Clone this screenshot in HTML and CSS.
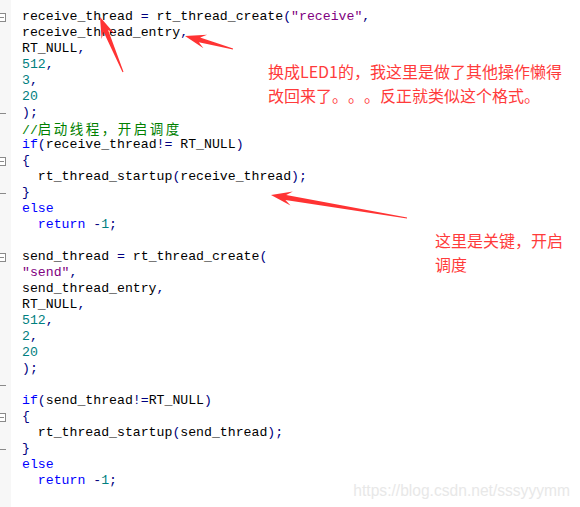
FILE: index.html
```html
<!DOCTYPE html>
<html lang="zh-CN">
<head>
<meta charset="utf-8">
<title>rt_thread code</title>
<link rel="stylesheet" href="styles.css">
</head>
<body>
<div class="shot">
  <div class="editor">
    <div class="ln"><span class="g"><i class="box"></i></span><code>receive_thread <b>=</b> rt_thread_create<b>(</b><s>"receive"</s><b>,</b></code></div>
    <div class="ln"><span class="g"></span><code>receive_thread_entry<b>,</b></code></div>
    <div class="ln"><span class="g"></span><code>RT_NULL<b>,</b></code></div>
    <div class="ln"><span class="g"></span><code><em>512</em><b>,</b></code></div>
    <div class="ln"><span class="g"></span><code><em>3</em><b>,</b></code></div>
    <div class="ln"><span class="g"></span><code><em>20</em></code></div>
    <div class="ln"><span class="g"><i class="tick"></i></span><code><b>);</b></code></div>
    <div class="ln"><span class="g"></span><code><u>//<span class="cjk">启动线程，开启调度</span></u></code></div>
    <div class="ln"><span class="g"></span><code><strong>if</strong><b>(</b>receive_thread<b>!=</b> RT_NULL<b>)</b></code></div>
    <div class="ln"><span class="g"><i class="box"></i></span><code><b>{</b></code></div>
    <div class="ln"><span class="g"></span><code>  rt_thread_startup<b>(</b>receive_thread<b>);</b></code></div>
    <div class="ln"><span class="g"><i class="tick"></i></span><code><b>}</b></code></div>
    <div class="ln"><span class="g"></span><code><strong>else</strong></code></div>
    <div class="ln"><span class="g"></span><code>  <strong>return</strong> <b>-</b><em>1</em><b>;</b></code></div>
    <div class="ln"><span class="g"></span><code></code></div>
    <div class="ln"><span class="g"><i class="box"></i></span><code>send_thread <b>=</b> rt_thread_create<b>(</b></code></div>
    <div class="ln"><span class="g"></span><code><s>"send"</s><b>,</b></code></div>
    <div class="ln"><span class="g"></span><code>send_thread_entry<b>,</b></code></div>
    <div class="ln"><span class="g"></span><code>RT_NULL<b>,</b></code></div>
    <div class="ln"><span class="g"></span><code><em>512</em><b>,</b></code></div>
    <div class="ln"><span class="g"></span><code><em>2</em><b>,</b></code></div>
    <div class="ln"><span class="g"></span><code><em>20</em></code></div>
    <div class="ln"><span class="g"></span><code><b>);</b></code></div>
    <div class="ln"><span class="g"><i class="tick"></i></span><code></code></div>
    <div class="ln"><span class="g"></span><code><strong>if</strong><b>(</b>send_thread<b>!=</b>RT_NULL<b>)</b></code></div>
    <div class="ln"><span class="g"><i class="box"></i></span><code><b>{</b></code></div>
    <div class="ln"><span class="g"></span><code>  rt_thread_startup<b>(</b>send_thread<b>);</b></code></div>
    <div class="ln"><span class="g"><i class="tick"></i></span><code><b>}</b></code></div>
    <div class="ln"><span class="g"></span><code><strong>else</strong></code></div>
    <div class="ln"><span class="g"></span><code>  <strong>return</strong> <b>-</b><em>1</em><b>;</b></code></div>
  </div>

  <p class="note note-1">换成LED1的，我这里是做了其他操作懒得<br>改回来了。。。反正就类似这个格式。</p>
  <p class="note note-2">这里是关键，开启<br>调度</p>

  <svg class="arrows" width="580" height="507" viewBox="0 0 580 507" aria-hidden="true">
    <polygon points="100,17 114.6,33.7 108.1,29.9 123.5,71.8 122.5,72.2 103.5,31.8 101.6,39.1"/>
    <polygon points="185,36 207.1,34.7 200.1,37.5 233.1,48.5 232.9,49.5 198.8,42.3 203.5,48.3"/>
    <polygon points="271,195 292.9,191.6 286.2,195.0 407.1,217.4 406.9,218.6 285.4,200.0 290.5,205.4"/>
  </svg>

  <div class="watermark">https://blog.csdn.net/sssyyymm</div>
</div>
</body>
</html>
```
FILE: styles.css
```css
html, body {
  margin: 0;
  padding: 0;
  background: #ffffff;
}

.shot {
  position: relative;
  width: 580px;
  height: 507px;
  overflow: hidden;
  background: #ffffff;
}

.editor {
  display: flex;
  flex-direction: column;
  box-sizing: border-box;
  height: 507px;
  padding-top: 9px;
  background: linear-gradient(to right, #f7f7f7 0, #f7f7f7 11px, transparent 11px);
}

.ln {
  display: flex;
  align-items: center;
  height: 16px;
}

.g {
  flex: none;
  width: 22px;
  height: 16px;
  display: flex;
  align-items: center;
}

.box {
  display: block;
  box-sizing: border-box;
  width: 9px;
  height: 9px;
  margin-left: -3px;
  border: 1px solid #8a8a8a;
  background: #fff;
  position: relative;
}

.box::after {
  content: "";
  position: absolute;
  left: 1px;
  right: 1px;
  top: 3px;
  height: 1px;
  background: #8a8a8a;
}

.tick {
  display: block;
  width: 6px;
  height: 1px;
  background: #8a8a8a;
}

code {
  font-family: "Liberation Mono", "Courier New", monospace;
  font-size: 13.2px;
  line-height: 16px;
  white-space: pre;
  color: #000000;
}

code b {
  font-weight: normal;
  color: #000080;
}

code s {
  text-decoration: none;
  color: #800080;
}

code em {
  font-style: normal;
  color: #008080;
}

code strong {
  font-weight: normal;
  color: #0000ff;
}

code u {
  text-decoration: none;
  color: #008000;
}

.cjk {
  font-family: "Noto Sans CJK SC", sans-serif;
  font-size: 13.5px;
  letter-spacing: 2.5px;
  text-spacing-trim: space-all;
}

.note {
  position: absolute;
  margin: 0;
  font-family: "Noto Sans CJK SC", "Microsoft YaHei", sans-serif;
  font-size: 16px;
  line-height: 24px;
  color: #ff3b3b;
  white-space: nowrap;
  text-spacing-trim: space-all;
}

.note-1 {
  left: 268px;
  top: 59px;
}

.note-2 {
  left: 435px;
  top: 228px;
}

.arrows {
  position: absolute;
  left: 0;
  top: 0;
  pointer-events: none;
}

.arrows polygon {
  fill: #ff3333;
}

.watermark {
  position: absolute;
  right: 10px;
  bottom: 7px;
  font-family: "Liberation Sans", Arial, sans-serif;
  font-size: 15.6px;
  line-height: 18px;
  color: #e8e8e8;
}
```
